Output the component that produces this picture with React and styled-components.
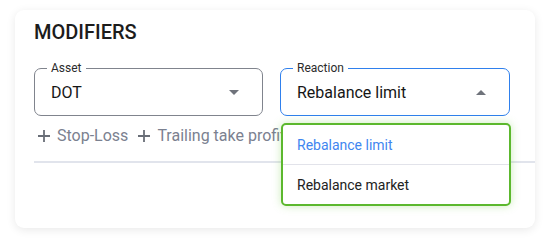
import { createGlobalStyle, styled } from "styled-components";

const Global = createGlobalStyle`
  body {
    margin: 0;
    background: #ffffff;
    font-family: Roboto, "Liberation Sans", sans-serif;
  }
`;

const Page = styled.div`
  padding: 10px 15px;
`;

const Card = styled.section`
  width: 520px;
  height: 218px;
  box-sizing: border-box;
  padding: 10px 25px 0 19px;
  background: #fff;
  border-radius: 9px;
  box-shadow: 0 2px 10px rgba(0, 0, 0, 0.09);
`;

const Title = styled.h2`
  margin: 0;
  font-size: 20px;
  line-height: 24px;
  font-weight: 500;
  color: #1c1c1c;
`;

const Fields = styled.div`
  display: grid;
  grid-template-columns: 229px 230px;
  column-gap: 17px;
  margin-top: 24px;
`;

const Field = styled.div`
  position: relative;
  height: 48px;
  box-sizing: border-box;
  border: 1px solid ${(p) => (p.$focused ? "#2f80ed" : "#80848d")};
  border-radius: 7px;
  display: flex;
  align-items: center;
  padding: 0 23px 0 16px;
`;

const Label = styled.span`
  position: absolute;
  top: -9px;
  left: 12px;
  padding: 0 4px;
  background: #fff;
  font-size: 12px;
  line-height: 16px;
  color: #2b2b2b;
`;

const Value = styled.span`
  flex: 1;
  font-size: 16px;
  color: #161616;
`;

const Caret = styled.span`
  width: 0;
  height: 0;
  border-left: 5px solid transparent;
  border-right: 5px solid transparent;
  ${(p) =>
    p.$up
      ? "border-bottom: 5px solid #6f737b;"
      : "border-top: 5px solid #6f737b;"}
`;

const Menu = styled.ul`
  position: absolute;
  top: calc(100% + 8px);
  left: 0;
  width: 230px;
  margin: 0;
  padding: 0;
  list-style: none;
  box-sizing: border-box;
  background: #fff;
  border: 2px solid #5cb82e;
  border-radius: 5px;
  box-shadow: 0 0 8px rgba(110, 200, 60, 0.35);
  z-index: 2;
`;

const MenuItem = styled.li`
  height: 39px;
  display: flex;
  align-items: center;
  padding-left: 14px;
  font-size: 14px;
  color: ${(p) => (p.$active ? "#3f86f0" : "#222")};
  & + & {
    border-top: 1px solid #e2e3ea;
  }
`;

const Actions = styled.div`
  display: flex;
  gap: 10px;
  margin-top: 8px;
  padding-left: 4px;
`;

const AddButton = styled.button`
  display: flex;
  align-items: center;
  gap: 7px;
  padding: 0;
  border: none;
  background: none;
  font-family: inherit;
  font-size: 16px;
  line-height: 24px;
  color: #7b8190;
  white-space: nowrap;
  svg {
    flex: none;
  }
`;

const Divider = styled.hr`
  margin: 13px -25px 0 0;
  border: none;
  height: 2px;
  background: #e1e4ec;
`;

const Plus = () => (
  <svg width="12" height="12" viewBox="0 0 12 12">
    <path d="M6 0v12M0 6h12" stroke="#696e77" strokeWidth="1.8" />
  </svg>
);

export default function App() {
  return (
    <Page>
      <Global />
      <Card>
        <Title>MODIFIERS</Title>
        <Fields>
          <Field>
            <Label>Asset</Label>
            <Value>DOT</Value>
            <Caret />
          </Field>
          <Field $focused>
            <Label>Reaction</Label>
            <Value>Rebalance limit</Value>
            <Caret $up />
            <Menu>
              <MenuItem $active>Rebalance limit</MenuItem>
              <MenuItem>Rebalance market</MenuItem>
            </Menu>
          </Field>
        </Fields>
        <Actions>
          <AddButton>
            <Plus />
            Stop-Loss
          </AddButton>
          <AddButton>
            <Plus />
            Trailing take profit
          </AddButton>
        </Actions>
        <Divider />
      </Card>
    </Page>
  );
}
